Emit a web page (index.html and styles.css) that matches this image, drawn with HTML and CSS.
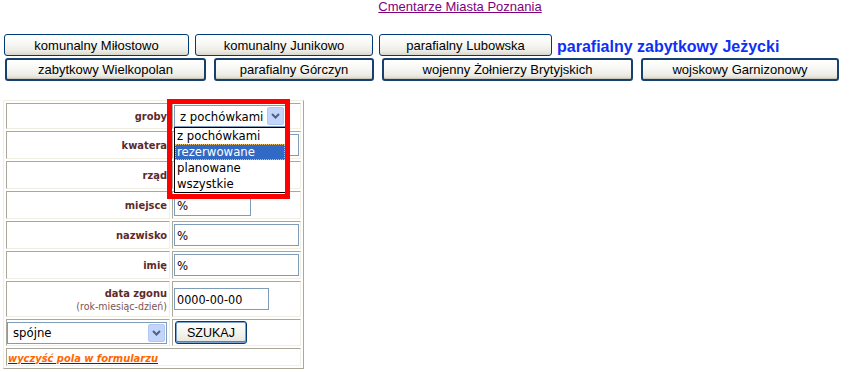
FILE: index.html
```html
<!DOCTYPE html>
<html lang="pl">
<head>
<meta charset="utf-8">
<title>Cmentarze Miasta Poznania</title>
<link rel="stylesheet" href="styles.css">
</head>
<body>
<div class="page">
  <div class="title"><a href="#">Cmentarze Miasta Poznania</a></div>

  <div class="nav">
    <div class="nav-row row1">
      <button class="btn w1">komunalny Miłostowo</button>
      <button class="btn w2">komunalny Junikowo</button>
      <button class="btn w3">parafialny Lubowska</button>
      <span class="current">parafialny zabytkowy Jeżycki</span>
    </div>
    <div class="nav-row row2">
      <button class="btn thick w4">zabytkowy Wielkopolan</button>
      <button class="btn thick w5">parafialny Górczyn</button>
      <button class="btn thick w6">wojenny Żołnierzy Brytyjskich</button>
      <button class="btn thick w7">wojskowy Garnizonowy</button>
    </div>
  </div>

  <form class="search">
    <table class="form-table">
      <tr class="h26">
        <th>groby</th>
        <td>
          <div class="select-wrap">
            <div class="select sel-groby">
              <span class="sel-text">z pochówkami</span>
              <span class="sel-arrow"><svg width="17" height="18" viewBox="0 0 17 18"><rect x="0.5" y="0.5" width="16" height="17" rx="1.5" fill="#c4d5fc" stroke="#b3c7f5"/><polyline points="5,7 8.5,10.5 12,7" fill="none" stroke="#4d6185" stroke-width="2"/></svg></span>
            </div>
            <ul class="dropdown">
              <li>z pochówkami</li>
              <li class="active">rezerwowane</li>
              <li>planowane</li>
              <li>wszystkie</li>
            </ul>
            <div class="highlight-box"></div>
          </div>
        </td>
      </tr>
      <tr class="h28">
        <th>kwatera</th>
        <td><input class="field f-full" type="text" value="%"></td>
      </tr>
      <tr class="h28">
        <th>rząd</th>
        <td><input class="field f-short" type="text" value="%"></td>
      </tr>
      <tr class="h28">
        <th>miejsce</th>
        <td><input class="field f-short" type="text" value="%"></td>
      </tr>
      <tr class="h28">
        <th>nazwisko</th>
        <td><input class="field f-full" type="text" value="%"></td>
      </tr>
      <tr class="h28">
        <th>imię</th>
        <td><input class="field f-full" type="text" value="%"></td>
      </tr>
      <tr class="h36">
        <th><span class="lbl-main">data zgonu</span><span class="lbl-hint">(rok-miesiąc-dzień)</span></th>
        <td><input class="field f-date" type="text" value="0000-00-00"></td>
      </tr>
      <tr class="h27">
        <td class="mode-cell">
          <div class="select sel-mode">
            <span class="sel-text">spójne</span>
            <span class="sel-arrow"><svg width="17" height="18" viewBox="0 0 17 18"><rect x="0.5" y="0.5" width="16" height="17" rx="1.5" fill="#c4d5fc" stroke="#b3c7f5"/><polyline points="5,7 8.5,10.5 12,7" fill="none" stroke="#4d6185" stroke-width="2"/></svg></span>
          </div>
        </td>
        <td><button class="submit" type="button">SZUKAJ</button></td>
      </tr>
      <tr class="h18">
        <td colspan="2" class="clear-cell"><a href="#" class="clear-link"><span>wyczyść pola w formularzu</span></a></td>
      </tr>
    </table>
  </form>
</div>
</body>
</html>
```

FILE: styles.css
```css
html, body {
  margin: 0;
  padding: 0;
  background: #ffffff;
}

body {
  font-family: "Liberation Sans", Arial, sans-serif;
  font-size: 13px;
  color: #000;
}

.page {
  width: 849px;
}

/* title */
.title {
  padding-left: 71px;
  text-align: center;
  line-height: 13px;
  height: 13px;
}

.title a {
  color: #800080;
  text-decoration: underline;
}

/* navigation buttons */
.nav {
  margin-top: 21px;
}

.nav-row {
  display: flex;
  align-items: center;
}

.row1 {
  padding-left: 4px;
  gap: 6px;
  height: 22px;
}

.row2 {
  padding-left: 5px;
  gap: 8px;
  height: 23px;
  margin-top: 2px;
}

.btn {
  box-sizing: border-box;
  height: 22px;
  padding: 0;
  margin: 0;
  font-family: "Liberation Sans", Arial, sans-serif;
  font-size: 13px;
  color: #000;
  border: 1px solid #003c74;
  border-radius: 3px;
  background: linear-gradient(#ffffff 0%, #f7f7f4 45%, #ecebe5 80%, #d9d6cb 100%);
  cursor: pointer;
}

.btn.thick {
  height: 23px;
  border: 2px solid #17406f;
  border-radius: 3px;
  box-shadow: inset 0 -1px 0 #c9c5b8;
}

.w1 { width: 185px; }
.w2 { width: 178px; }
.w3 { width: 173px; }
.w4 { width: 201px; }
.w5 { width: 160px; }
.w6 { width: 251px; }
.w7 { width: 198px; }

.current {
  margin-left: -1px;
  font-weight: bold;
  font-size: 16px;
  color: #0f2ff5;
  line-height: 16px;
  padding-top: 3px;
}

/* search form */
.search {
  margin: 19px 0 0 3px;
}

.form-table {
  width: 300px;
  border-collapse: separate;
  border-spacing: 2px;
  border: 1px solid;
  border-color: #f1efe2 #aca899 #aca899 #f1efe2;
  table-layout: fixed;
}

.form-table th,
.form-table td {
  border: 1px solid;
  border-color: #aca899 #f1efe2 #f1efe2 #aca899;
  padding: 0 1px;
  vertical-align: middle;
}

.form-table th {
  width: 159px;
  text-align: right;
  padding-right: 2px;
  font-family: "DejaVu Sans Condensed", "DejaVu Sans", sans-serif;
  font-stretch: condensed;
  font-size: 11px;
  font-weight: bold;
  color: #5c2b2b;
}

.form-table td {
  width: 125px;
}

.h26 { height: 26px; }
.h28 { height: 28px; }
.h36 { height: 36px; }
.h27 { height: 27px; }
.h18 { height: 18px; }

.lbl-main {
  display: block;
  line-height: 13px;
}

.lbl-hint {
  display: block;
  font-weight: normal;
  font-size: 10.5px;
  line-height: 12px;
  color: #7d5555;
}

/* inputs */
.field {
  box-sizing: border-box;
  height: 22px;
  margin: 0;
  padding: 0 2px;
  border: 1px solid #7f9db9;
  font-family: "DejaVu Sans Condensed", "DejaVu Sans", sans-serif;
  font-stretch: condensed;
  font-size: 13px;
  color: #000;
  display: block;
}

.f-full { width: 125px; }
.f-short { width: 77px; }
.f-date { width: 95px; font-size: 12.5px; }

/* custom select */
.select-wrap {
  position: relative;
  width: 112px;
}

.select {
  box-sizing: border-box;
  height: 22px;
  border: 1px solid #7f9db9;
  background: #fff;
  display: flex;
  align-items: center;
  justify-content: space-between;
  font-family: "DejaVu Sans Condensed", "DejaVu Sans", sans-serif;
  font-stretch: condensed;
  font-size: 13px;
  color: #000;
}

.sel-groby {
  width: 112px;
}

.sel-text {
  padding-left: 5px;
  white-space: nowrap;
}

.sel-arrow {
  display: flex;
  padding-right: 1px;
}

.dropdown {
  position: absolute;
  top: 22px;
  left: 0;
  width: 112px;
  box-sizing: border-box;
  margin: 0;
  padding: 0;
  list-style: none;
  border: 1px solid #000;
  background: #fff;
  font-family: "DejaVu Sans Condensed", "DejaVu Sans", sans-serif;
  font-stretch: condensed;
  font-size: 13px;
  line-height: 16px;
  z-index: 2;
}

.dropdown li {
  padding-left: 2px;
  height: 16px;
  white-space: nowrap;
}

.dropdown li.active {
  background: #316ac5;
  color: #fff;
  outline: 1px dotted #e8c070;
  outline-offset: -1px;
}

.highlight-box {
  position: absolute;
  left: -7px;
  top: -6px;
  width: 123px;
  height: 100px;
  box-sizing: border-box;
  border: 5px solid #ff0000;
  z-index: 3;
  pointer-events: none;
}

/* bottom row */
.form-table td.mode-cell {
  width: auto;
  padding: 0;
}

.sel-mode {
  width: 160px;
  margin-left: 0;
}

.sel-mode .sel-text {
  padding-left: 5px;
}

.submit {
  box-sizing: border-box;
  width: 72px;
  height: 23px;
  margin: 0 0 0 1px;
  padding: 0;
  border: 1px solid #003c74;
  border-radius: 3px;
  background: linear-gradient(#ffffff 0%, #f5f4ef 50%, #e6e4da 100%);
  box-shadow: inset 0 0 0 1px #7da2ce, inset 0 -1px 0 1px #5a7fc0;
  font-family: "Liberation Sans", Arial, sans-serif;
  font-size: 12.5px;
  color: #000;
  display: block;
}

.clear-cell {
  padding: 0 1px;
  vertical-align: bottom;
}

.clear-link {
  font-family: "DejaVu Sans Condensed", "DejaVu Sans", sans-serif;
  font-stretch: condensed;
  font-size: 11px;
  font-weight: bold;
  font-style: italic;
  color: #1a1aa6;
  text-decoration: underline;
  text-decoration-color: #1a1aa6;
}

.clear-link span {
  color: #ff6600;
}
```
